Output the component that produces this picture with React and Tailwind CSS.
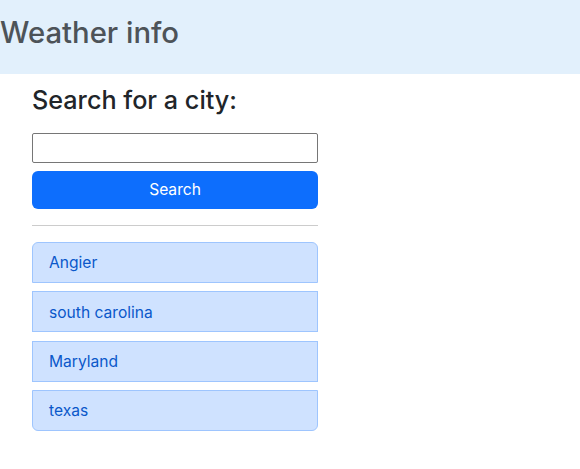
export default function App() {
    const cities = ['Angier', 'south carolina', 'Maryland', 'texas']

    return (
        <div className="min-h-[469px] bg-white font-['Inter',sans-serif] text-[#212529]">
            <header className="h-[74px] bg-[#e2f0fc] pt-[14px]">
                <h1 className="text-[29.3px] leading-[38px] font-medium text-[#4d5358]">Weather info</h1>
            </header>

            <main className="w-[286px] ml-[32px] pt-[11px]">
                <h3 className="text-[25.2px] leading-[30px] font-medium">Search for a city:</h3>

                <input
                    type="text"
                    className="mt-[18px] block h-[30px] w-full border border-[#767676] rounded-[2px] bg-white px-1 text-[14px] outline-none"
                />
                <button className="mt-[8px] h-[38px] w-full rounded-[6px] bg-[#0d6efd] text-[15.6px] text-white">
                    Search
                </button>

                <hr className="mt-[16px] border-t border-[#cccccc]" />

                <ul className="mt-[16px] flex flex-col gap-[8.3px]">
                    {cities.map((c, i) => (
                        <li
                            key={c}
                            className={`h-[41px] flex items-center border border-[#9ec5fe] bg-[#cfe2ff] px-[16px] pt-[1px] text-[15.6px] text-[#0a58ca] ${
                                i === 0 ? 'rounded-t-[6px]' : ''
                            } ${i === cities.length - 1 ? 'rounded-b-[6px]' : ''}`}
                        >
                            {c}
                        </li>
                    ))}
                </ul>
            </main>
        </div>
    )
}
